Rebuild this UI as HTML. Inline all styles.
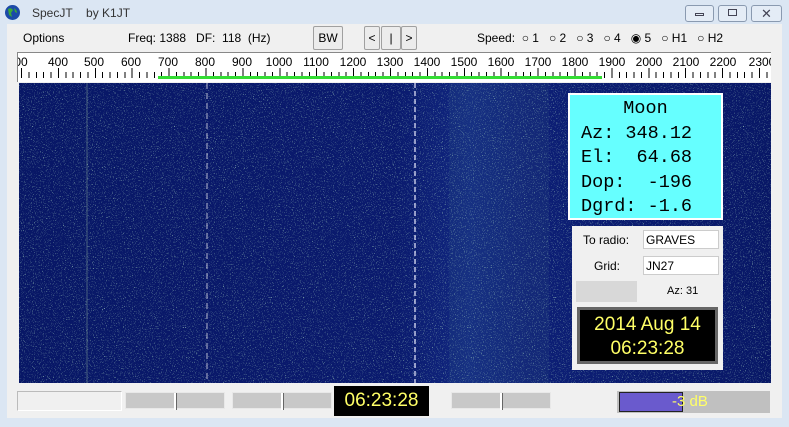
<!DOCTYPE html>
<html><head><style>
*{margin:0;padding:0;box-sizing:border-box}
body{width:789px;height:427px;background:#dbe6f3;font-family:"Liberation Sans",sans-serif;font-size:12px;color:#000;position:relative;overflow:hidden}
.a{position:absolute}
.client{left:7px;top:24px;width:775px;height:394px;background:#f0f0f0}
.btn{background:#ececec;border:1px solid #a0a0a0;border-radius:2px;text-align:center;font-size:12px}
.lbl{font-size:12px;white-space:nowrap}
.ruler{left:17px;top:52px;width:754px;height:30px;background:#fff;border-left:1px solid #888;border-top:1px solid #888;overflow:hidden}
.num{position:absolute;top:2px;font-size:12px;transform:translateX(-50%)}
.moon{left:568px;top:93px;width:155px;height:127px;background:#6ff;border:2px solid #fff;font-family:"Liberation Mono",monospace;font-size:18.5px;line-height:24.5px;padding-top:2px;padding-left:11px;white-space:pre}
.panel{left:572px;top:226px;width:151px;height:144px;background:#f0f0f0}
.inp{background:#fff;border:1px solid #ccc;font-size:12px;padding-left:2px;line-height:18px}
.lcd{background:#000;color:#ff6;text-align:center;font-size:19px}
.sl{background:#c8c8c8;border:1px solid #e8e8e8;height:17px;top:392px}
.sl i{position:absolute;top:0;width:3px;height:17px;background:#fff;border-right:1px solid #666}
</style></head><body>
<svg class="a" style="left:4px;top:4px" width="17" height="17" viewBox="0 0 17 17"><circle cx="8.5" cy="8.5" r="7.5" fill="#1c4aa8"/><path d="M4 5 Q7 3 9 6 L7 9 L8 13 L5 11 Z M10 4 Q13 6 13 9 L11 8 Z" fill="#3aa83a"/></svg>
<div class="a lbl" style="left:32px;top:6px;color:#333">SpecJT&nbsp;&nbsp;&nbsp;&nbsp;by K1JT</div>
<div class="a" style="left:685px;top:5px;width:29px;height:17px;border:1px solid #8a9ab0;border-radius:3px;background:#e4ecf6"></div>
<div class="a" style="left:695px;top:13px;width:9px;height:3px;border:1px solid #445"></div>
<div class="a" style="left:718px;top:5px;width:29px;height:17px;border:1px solid #8a9ab0;border-radius:3px;background:#e4ecf6"></div>
<div class="a" style="left:728px;top:9px;width:9px;height:7px;border:1px solid #445"></div>
<div class="a" style="left:751px;top:5px;width:31px;height:17px;border:1px solid #8a9ab0;border-radius:3px;background:#e4ecf6;text-align:center;font-size:13px;line-height:15px;color:#445">✕</div>
<div class="a client"></div>
<div class="a lbl" style="left:23px;top:31px">Options</div>
<div class="a lbl" style="left:128px;top:31px">Freq: 1388&nbsp;&nbsp;&nbsp;DF:&nbsp;&nbsp;118&nbsp;&nbsp;(Hz)</div>
<div class="a btn" style="left:313px;top:26px;width:30px;height:24px;line-height:22px">BW</div>
<div class="a btn" style="left:364px;top:26px;width:16px;height:24px;line-height:22px">&lt;</div>
<div class="a btn" style="left:381px;top:26px;width:20px;height:24px;line-height:22px">|</div>
<div class="a btn" style="left:401px;top:26px;width:16px;height:24px;line-height:22px">&gt;</div>
<div class="a lbl" style="left:477px;top:31px">Speed:&nbsp;&nbsp;○ 1&nbsp;&nbsp;&nbsp;○ 2&nbsp;&nbsp;&nbsp;○ 3&nbsp;&nbsp;&nbsp;○ 4&nbsp;&nbsp;&nbsp;◉ 5&nbsp;&nbsp;&nbsp;○ H1&nbsp;&nbsp;&nbsp;○ H2</div>
<div class="a ruler">
<div class="num" style="left:3px">00</div>
<div class="num" style="left:40px">400</div><div class="num" style="left:76px">500</div><div class="num" style="left:113px">600</div><div class="num" style="left:150px">700</div><div class="num" style="left:187px">800</div><div class="num" style="left:224px">900</div><div class="num" style="left:261px">1000</div><div class="num" style="left:298px">1100</div><div class="num" style="left:335px">1200</div><div class="num" style="left:372px">1300</div><div class="num" style="left:409px">1400</div><div class="num" style="left:446px">1500</div><div class="num" style="left:483px">1600</div><div class="num" style="left:520px">1700</div><div class="num" style="left:557px">1800</div><div class="num" style="left:594px">1900</div><div class="num" style="left:631px">2000</div><div class="num" style="left:668px">2100</div><div class="num" style="left:705px">2200</div><div class="num" style="left:744px">2300</div>
<div class="a" style="left:3px;top:19px;width:750px;height:6px;background:repeating-linear-gradient(90deg,#000 0 1px,transparent 1px 7.38px)"></div>
<div class="a" style="left:3px;top:15px;width:750px;height:10px;background:repeating-linear-gradient(90deg,#000 0 1px,transparent 1px 36.9px)"></div>
<div class="a" style="left:140px;top:23px;width:444px;height:3px;background:#33dd33"></div>
</div>
<svg class="a" style="left:19px;top:83px" width="752" height="300">
<filter id="n" x="0" y="0" width="100%" height="100%"><feTurbulence type="fractalNoise" baseFrequency="0.9" numOctaves="2" seed="3"/><feColorMatrix values="0 0 0 0 0.35  0 0 0 0 0.6  0 0 0 0 0.5  0 0 0 4 -2.45"/></filter>
<linearGradient id="g" x1="0" x2="1"><stop offset="0" stop-color="#081766"/><stop offset="0.5" stop-color="#0a1a6e"/><stop offset="0.6" stop-color="#112780"/><stop offset="0.68" stop-color="#0d1f76"/><stop offset="1" stop-color="#081766"/></linearGradient>
<rect width="752" height="300" fill="url(#g)"/>
<rect width="752" height="300" filter="url(#n)"/>
<rect x="430" width="100" height="300" fill="#6a9" opacity="0.07"/>
<line x1="68" y1="0" x2="68" y2="300" stroke="#8a9" stroke-width="1" opacity="0.5"/>
<line x1="188" y1="0" x2="188" y2="300" stroke="#ccd" stroke-width="1.5" stroke-dasharray="6 4" opacity="0.6"/>
<line x1="396" y1="0" x2="396" y2="300" stroke="#eef" stroke-width="1.5" stroke-dasharray="5 3" opacity="0.8"/>
</svg>
<div class="a moon"><div style="text-align:center;padding-right:11px">Moon</div>Az: 348.12
El:  64.68
Dop:  -196
Dgrd: -1.6</div>
<div class="a panel"></div>
<div class="a lbl" style="left:583px;top:233px">To radio:</div>
<div class="a inp" style="left:643px;top:230px;width:76px;height:19px">GRAVES</div>
<div class="a lbl" style="left:594px;top:259px">Grid:</div>
<div class="a inp" style="left:643px;top:256px;width:76px;height:19px">JN27</div>
<div class="a" style="left:576px;top:281px;width:61px;height:21px;background:#d8d8d8"></div>
<div class="a lbl" style="left:667px;top:285px;font-size:11px">Az: 31</div>
<div class="a lcd" style="left:577px;top:307px;width:141px;height:57px;border:3px solid #666;line-height:24px;padding-top:3px">2014 Aug 14<br>06:23:28</div>
<div class="a" style="left:17px;top:391px;width:105px;height:20px;border:1px solid #bbb;border-right-color:#fff;border-bottom-color:#fff"></div>
<div class="a sl" style="left:125px;width:100px"><i style="left:48px"></i></div>
<div class="a sl" style="left:232px;width:100px"><i style="left:48px"></i></div>
<div class="a lcd" style="left:334px;top:386px;width:95px;height:30px;line-height:30px">06:23:28</div>
<div class="a sl" style="left:451px;width:100px"><i style="left:48px"></i></div>
<div class="a" style="left:617px;top:391px;width:153px;height:22px;background:#c0c0c0"></div>
<div class="a" style="left:619px;top:392px;width:64px;height:20px;background:#6a5acd;border:1px solid #222"></div>
<div class="a lbl" style="left:672px;top:393px;color:#ff6;font-size:15px">-3 dB</div>
</body></html>
